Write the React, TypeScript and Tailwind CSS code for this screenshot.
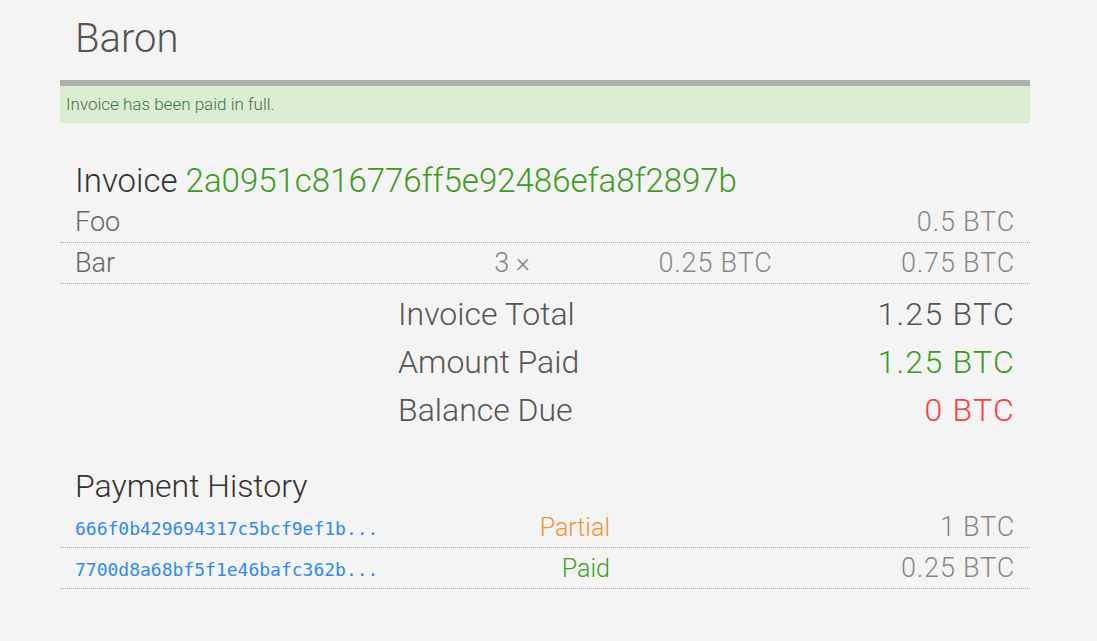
export default function App() {
  const items = [
    { name: "Foo", qty: "", price: "", total: "0.5 BTC" },
    { name: "Bar", qty: "3 ×", price: "0.25 BTC", total: "0.75 BTC" },
  ];

  const payments = [
    { hash: "666f0b429694317c5bcf9ef1b...", status: "Partial", color: "text-[#f39332]", amount: "1 BTC" },
    { hash: "7700d8a68bf5f1e46bafc362b...", status: "Paid", color: "text-[#3ea124]", amount: "0.25 BTC" },
  ];

  return (
    <div className="min-h-screen bg-[#f4f4f4] font-['Roboto',sans-serif] font-light">
      <div className="w-[970px] ml-[60px] pb-10">
        <h1 className="pt-[17px] px-[15px] text-[40px] leading-[44px] text-[#555]">Baron</h1>

        <div className="mt-[19px] h-[43px] border-t-[6px] border-[#b0b0b0] bg-[#dcedd4] rounded-b-[4px] shadow-[inset_0_-1px_0_#cfe5c3] flex items-center px-[6px]">
          <span className="text-[17px] text-[#3c763d]">Invoice has been paid in full.</span>
        </div>

        <h2 className="mt-[37px] px-[15px] text-[33px] leading-[42px] text-[#333]">
          Invoice <span className="text-[#3d9b22]">2a0951c816776ff5e92486efa8f2897b</span>
        </h2>

        <div>
          {items.map((it) => (
            <div
              key={it.name}
              className="grid grid-cols-4 h-[41px] items-center border-b border-dotted border-[#aaa] text-[27px] text-[#888]"
            >
              <div className="px-[15px] text-[#666]">{it.name}</div>
              <div className="px-[15px] text-right">{it.qty}</div>
              <div className="px-[15px] text-right tracking-[0.03em]">{it.price}</div>
              <div className="px-[15px] text-right tracking-[0.03em]">{it.total}</div>
            </div>
          ))}
        </div>

        <div className="mt-[6px] ml-[323px] text-[32px] text-[#555]">
          <div className="flex justify-between items-center h-[48px] px-[15px]">
            <span>Invoice Total</span>
            <span className="tracking-[0.04em]">1.25 BTC</span>
          </div>
          <div className="flex justify-between items-center h-[48px] px-[15px]">
            <span>Amount Paid</span>
            <span className="tracking-[0.04em] text-[#3d9b22]">1.25 BTC</span>
          </div>
          <div className="flex justify-between items-center h-[48px] px-[15px]">
            <span>Balance Due</span>
            <span className="tracking-[0.04em] text-[#ff3c3c]">0 BTC</span>
          </div>
        </div>

        <h2 className="mt-[31px] px-[15px] text-[32px] leading-[42px] text-[#333]">Payment History</h2>

        <div>
          {payments.map((p) => (
            <div
              key={p.hash}
              className="grid grid-cols-[323px_242px_1fr] h-[41px] items-center border-b border-dotted border-[#aaa]"
            >
              <div className="px-[15px] pt-[3px] font-['DejaVu_Sans_Mono',monospace] font-normal text-[18px] text-[#2f8af0]">
                {p.hash}
              </div>
              <div className={`px-[15px] text-right text-[25px] ${p.color}`}>{p.status}</div>
              <div className="px-[15px] text-right text-[27px] tracking-[0.03em] text-[#888]">{p.amount}</div>
            </div>
          ))}
        </div>
      </div>
    </div>
  );
}
